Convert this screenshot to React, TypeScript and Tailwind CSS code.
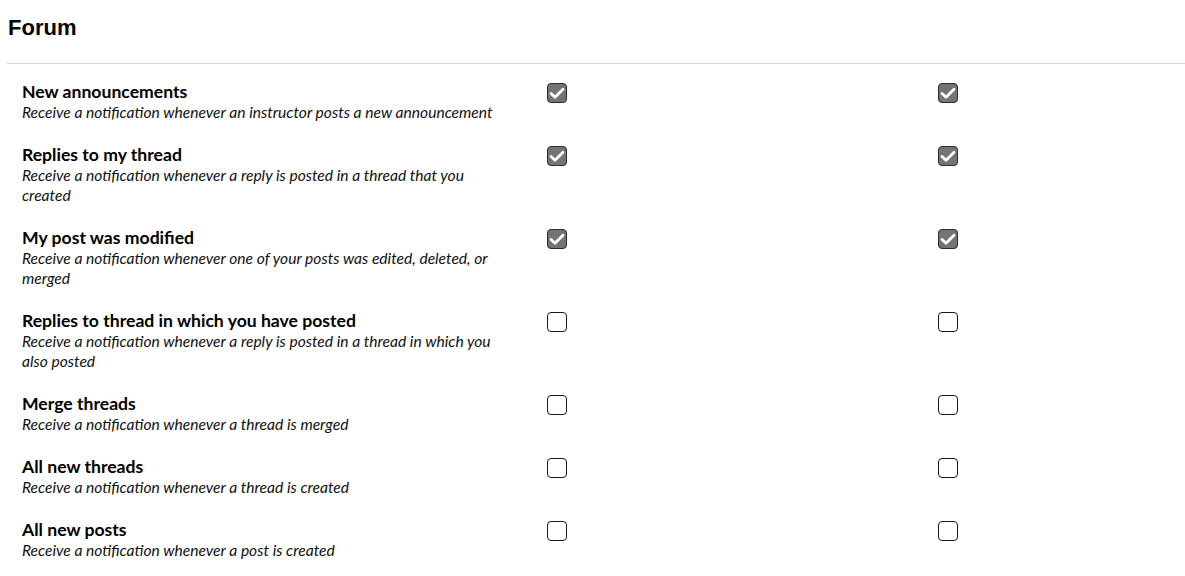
import { useState } from "react";

interface Pref {
  title: string;
  desc: string;
  checked: boolean;
}

const prefs: Pref[] = [
  {
    title: "New announcements",
    desc: "Receive a notification whenever an instructor posts a new announcement",
    checked: true,
  },
  {
    title: "Replies to my thread",
    desc: "Receive a notification whenever a reply is posted in a thread that you created",
    checked: true,
  },
  {
    title: "My post was modified",
    desc: "Receive a notification whenever one of your posts was edited, deleted, or merged",
    checked: true,
  },
  {
    title: "Replies to thread in which you have posted",
    desc: "Receive a notification whenever a reply is posted in a thread in which you also posted",
    checked: false,
  },
  {
    title: "Merge threads",
    desc: "Receive a notification whenever a thread is merged",
    checked: false,
  },
  {
    title: "All new threads",
    desc: "Receive a notification whenever a thread is created",
    checked: false,
  },
  {
    title: "All new posts",
    desc: "Receive a notification whenever a post is created",
    checked: false,
  },
];

function Checkbox({ checked, onToggle }: { checked: boolean; onToggle: () => void }) {
  return (
    <button
      onClick={onToggle}
      className={`w-5 h-5 rounded-[4px] border-[1.5px] flex items-center justify-center ${
        checked ? "bg-[#747474] border-[#2b2b2b]" : "bg-white border-[#1a1a1a]"
      }`}
    >
      {checked && (
        <svg className="w-[16px] h-[16px]" viewBox="0 0 16 16" fill="none">
          <path d="M2 8.5l4 3.8 8-8" stroke="white" strokeWidth={2.8} strokeLinecap="round" strokeLinejoin="round" />
        </svg>
      )}
    </button>
  );
}

export default function App() {
  const [state, setState] = useState(prefs.map((p) => [p.checked, p.checked]));

  const toggle = (row: number, col: number) => {
    setState((s) => s.map((r, i) => (i === row ? r.map((v, j) => (j === col ? !v : v)) : r)));
  };

  return (
    <div className="bg-white min-h-screen text-black font-['Lato','Liberation_Sans',sans-serif]">
      <h2 className="font-['Liberation_Sans',Arial,sans-serif] font-bold text-[22px] leading-none pl-[8px] pt-[17px] pb-[24px]">
        Forum
      </h2>
      <div className="ml-[7px] border-t border-[#d6d6d6]" />
      <div className="pt-[17px]">
        {prefs.map((p, i) => (
          <div key={p.title} className="flex pb-[22px]">
            <div className="w-[525px] pl-[22px] pr-[20px]">
              <div className="font-bold text-[17.6px] leading-[21px]">{p.title}</div>
              <div className="italic text-[15.6px] leading-[20px] text-[#111]">{p.desc}</div>
            </div>
            <div className="w-[391px] pl-[22px] pt-[2px]">
              <Checkbox checked={state[i][0]} onToggle={() => toggle(i, 0)} />
            </div>
            <div className="pl-[22px] pt-[2px]">
              <Checkbox checked={state[i][1]} onToggle={() => toggle(i, 1)} />
            </div>
          </div>
        ))}
      </div>
    </div>
  );
}
